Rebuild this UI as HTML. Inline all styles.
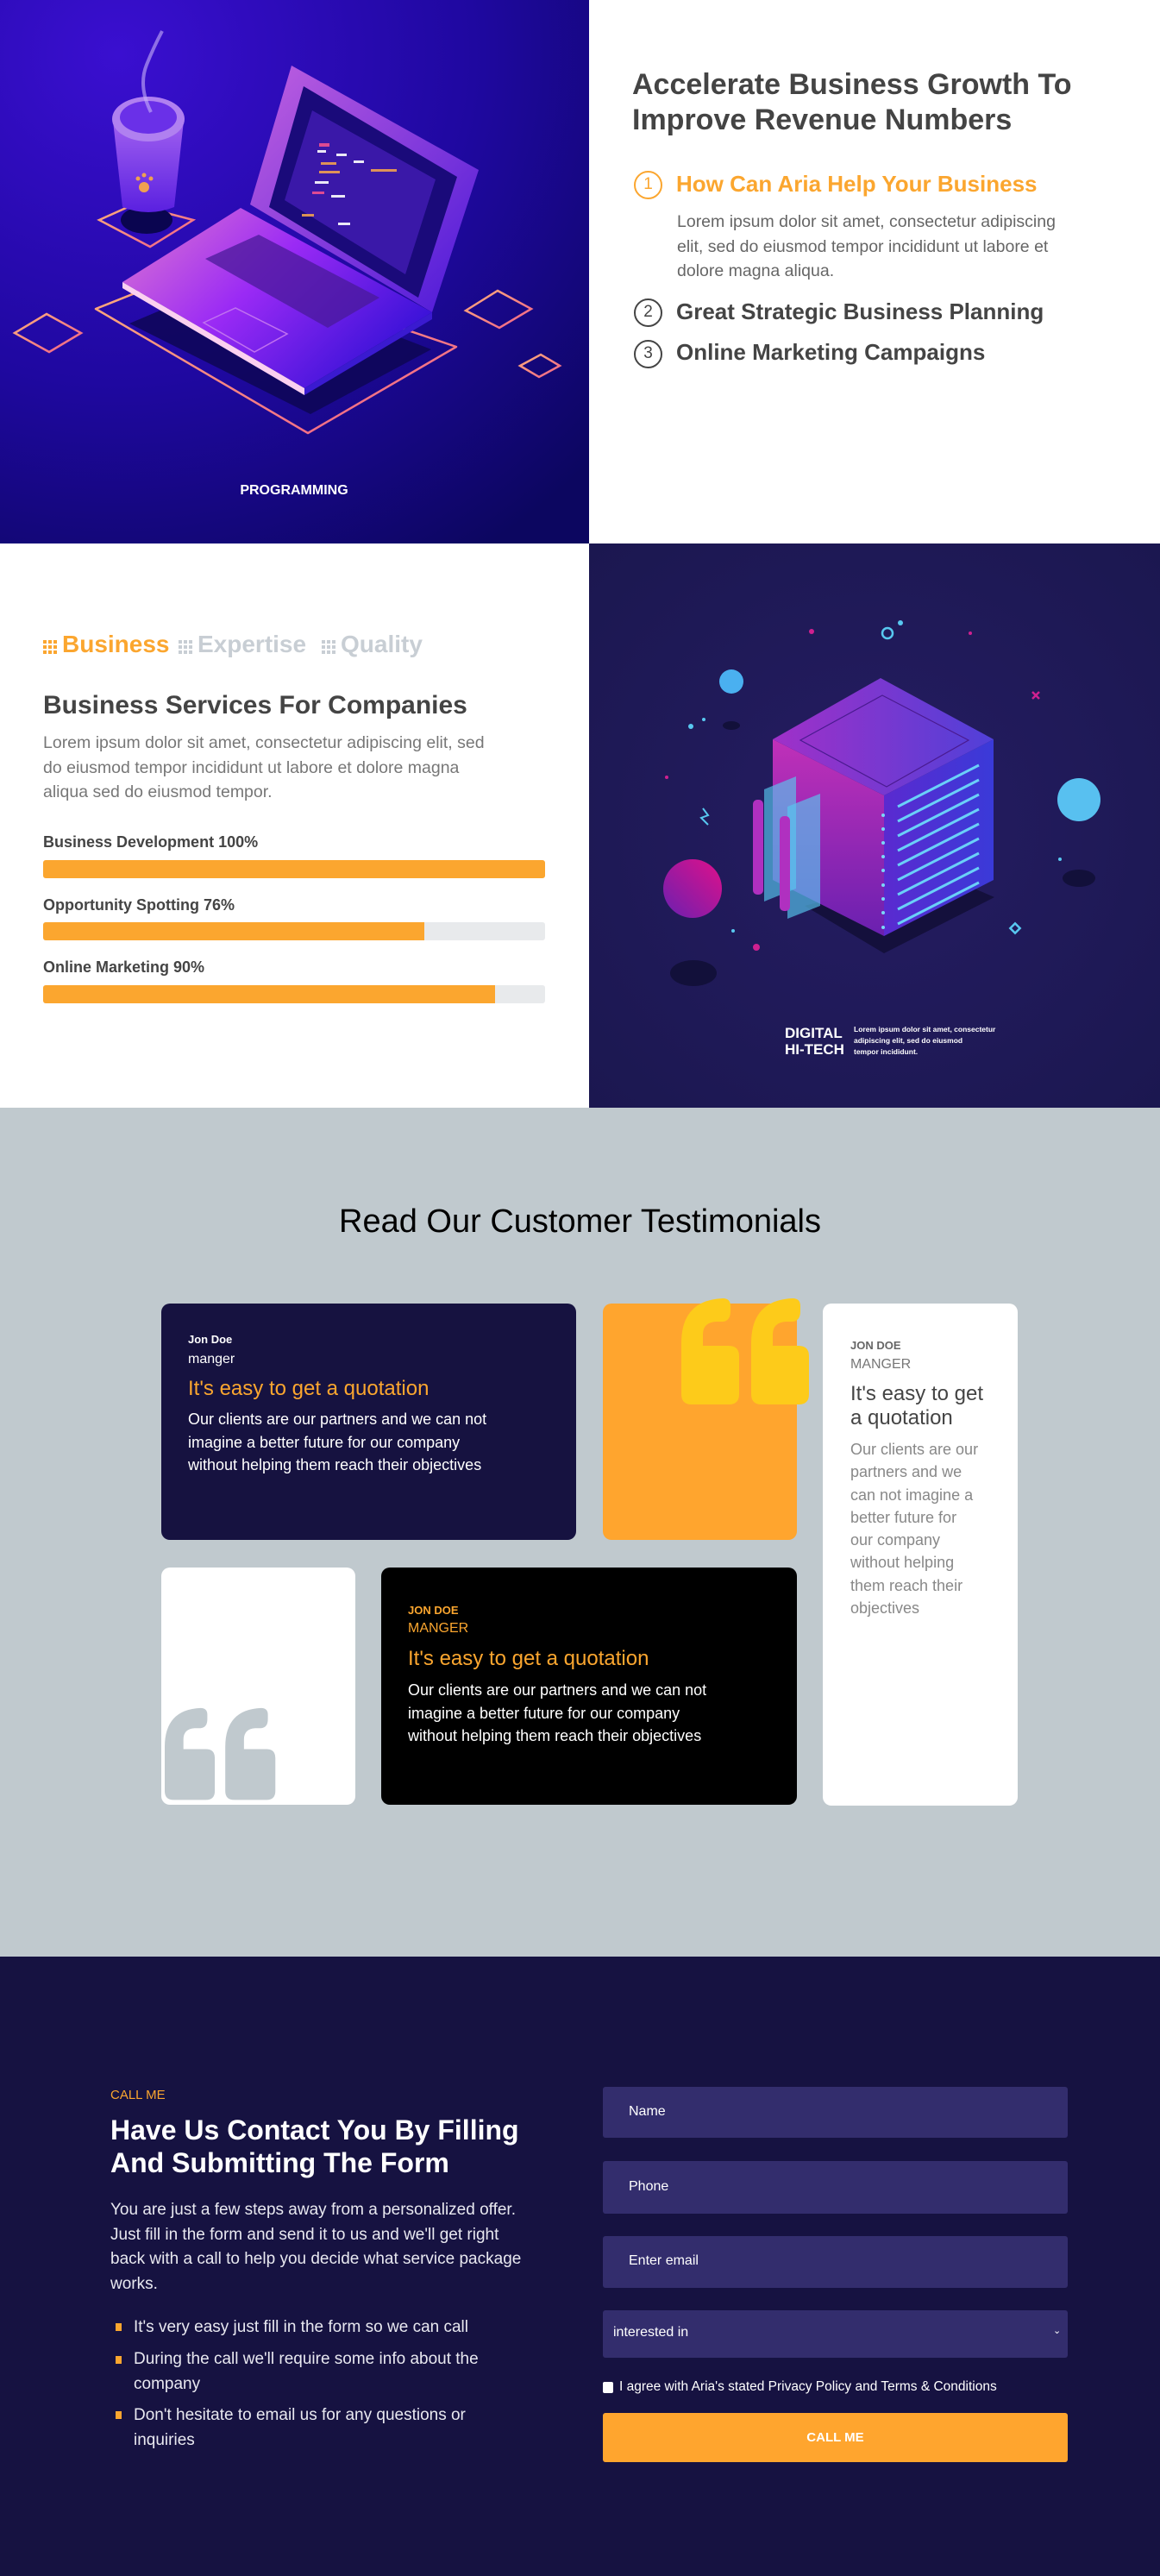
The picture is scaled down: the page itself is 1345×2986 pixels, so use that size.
<!DOCTYPE html>
<html><head><meta charset="utf-8">
<style>
*{margin:0;padding:0;box-sizing:border-box}
body{width:1345px;height:2986px;font-family:"Liberation Sans",sans-serif;background:#fff;position:relative;overflow:hidden}
.a{position:absolute}
.t{position:absolute;white-space:nowrap}
</style></head><body>

<!-- Section 1 left illustration -->
<svg class="a" style="left:0;top:0" width="683" height="630" viewBox="0 0 683 630">
<defs>
<radialGradient id="bg1" cx="0.2" cy="0.1" r="1.1"><stop offset="0" stop-color="#3a0fd0"/><stop offset="0.55" stop-color="#1f08a0"/><stop offset="1" stop-color="#0c0660"/></radialGradient>
<linearGradient id="lap" x1="0" y1="0" x2="1" y2="0.6"><stop offset="0" stop-color="#e07ad0"/><stop offset="0.5" stop-color="#9a2af5"/><stop offset="1" stop-color="#3a12d8"/></linearGradient>
<linearGradient id="scr" x1="0" y1="0" x2="1" y2="1"><stop offset="0" stop-color="#c060e0"/><stop offset="1" stop-color="#4a18d8"/></linearGradient>
<linearGradient id="ln" x1="0" y1="0" x2="1" y2="1"><stop offset="0" stop-color="#ffb07a"/><stop offset="1" stop-color="#f0608a"/></linearGradient>
<linearGradient id="cup" x1="0" y1="0" x2="0" y2="1"><stop offset="0" stop-color="#a060f0"/><stop offset="1" stop-color="#5a20e0"/></linearGradient>
</defs>
<rect width="683" height="630" fill="url(#bg1)"/>
<polygon points="111,358 244,305 529,402 357,502" fill="none" stroke="url(#ln)" stroke-width="2.5" stroke-linejoin="round"/>
<polygon points="150,375 280,320 500,405 360,480" fill="#0c0650" opacity="0.8"/>
<polygon points="17,386 54,364 94,386 57,408" fill="none" stroke="url(#ln)" stroke-width="2.5"/>
<polygon points="540,360 577,337 616,358 579,380" fill="none" stroke="url(#ln)" stroke-width="2.5"/>
<polygon points="603,424 627,411 649,424 625,437" fill="none" stroke="url(#ln)" stroke-width="2.5"/>
<polygon points="115,255 155,237 224,255 174,286" fill="none" stroke="url(#ln)" stroke-width="2.5"/>
<ellipse cx="170" cy="255" rx="30" ry="16" fill="#0a0550"/>
<!-- laptop screen -->
<polygon points="338,76 555,197 501,362 290,237" fill="url(#scr)"/>
<polygon points="352,100 530,205 485,345 312,240" fill="#1a0a7a"/>
<polygon points="362,128 505,208 470,318 330,232" fill="#3a18a8"/>
<g fill="#fff" opacity="0.9">
<rect x="370" y="166" width="12" height="4" fill="#f05090"/><rect x="368" y="174" width="10" height="3"/><rect x="390" y="178" width="12" height="3"/><rect x="372" y="188" width="18" height="3" fill="#f0a050"/><rect x="410" y="186" width="12" height="3"/><rect x="370" y="198" width="24" height="3" fill="#f0a050"/><rect x="430" y="196" width="30" height="3" fill="#f0a050"/><rect x="365" y="210" width="16" height="3"/><rect x="362" y="222" width="14" height="3" fill="#f05090"/><rect x="384" y="226" width="16" height="3"/><rect x="350" y="248" width="14" height="3" fill="#f0a050"/><rect x="392" y="258" width="14" height="3"/>
</g>
<!-- base -->
<polygon points="142,327 279,241 501,362 353,450" fill="url(#lap)"/>
<polygon points="142,327 353,450 353,458 142,334" fill="#fbd0f0"/>
<polygon points="353,450 501,362 501,370 353,458" fill="#3a1ad0"/>
<polygon points="238,300 300,272 440,345 380,380" fill="#4a1a9a" opacity="0.75"/>
<polygon points="236,374 273,357 333,387 295,408" fill="none" stroke="#c070f0" stroke-width="1.5"/>
<!-- cup -->
<path d="M131,140 L142,240 Q172,252 202,240 L213,140 Z" fill="url(#cup)"/>
<ellipse cx="172" cy="138" rx="42" ry="26" fill="#b080f0"/>
<ellipse cx="172" cy="136" rx="33" ry="19" fill="#6a30e8"/>
<circle cx="167" cy="217" r="6" fill="#f0a050"/><circle cx="160" cy="207" r="2.5" fill="#f0a050"/><circle cx="167" cy="203" r="2.5" fill="#f0a050"/><circle cx="175" cy="207" r="2.5" fill="#f0a050"/>
<path d="M175,130 Q160,100 170,75 Q178,55 188,36" fill="none" stroke="#c8b0f8" stroke-width="4" opacity="0.6"/>
<text x="341" y="573" text-anchor="middle" font-family="Liberation Sans" font-weight="bold" font-size="16" fill="#fff">PROGRAMMING</text>
</svg>

<!-- Section 1 right text -->
<div class="t" style="left:733px;top:78px;font-size:34px;line-height:41px;font-weight:bold;color:#444">Accelerate Business Growth To<br>Improve Revenue Numbers</div>
<div class="a" style="left:735px;top:198px;width:33px;height:33px;border:2.5px solid #fba62f;border-radius:50%;color:#fba62f;font-size:19px;text-align:center;line-height:28px">1</div>
<div class="t" style="left:784px;top:198px;font-size:26px;font-weight:bold;color:#fba62f">How Can Aria Help Your Business</div>
<div class="t" style="left:785px;top:243px;font-size:19.5px;line-height:28.5px;color:#666">Lorem ipsum dolor sit amet, consectetur adipiscing<br>elit, sed do eiusmod tempor incididunt ut labore et<br>dolore magna aliqua.</div>
<div class="a" style="left:735px;top:346px;width:33px;height:33px;border:2.5px solid #444;border-radius:50%;color:#444;font-size:19px;text-align:center;line-height:28px">2</div>
<div class="t" style="left:784px;top:346px;font-size:26px;font-weight:bold;color:#444">Great Strategic Business Planning</div>
<div class="a" style="left:735px;top:394px;width:33px;height:33px;border:2.5px solid #444;border-radius:50%;color:#444;font-size:19px;text-align:center;line-height:28px">3</div>
<div class="t" style="left:784px;top:393px;font-size:26px;font-weight:bold;color:#444">Online Marketing Campaigns</div>

<!-- Section 2 left -->
<svg class="a" style="left:50px;top:742px" width="18" height="16"><g fill="#fba62f"><rect x="0" y="0" width="4" height="4"/><rect x="6" y="0" width="4" height="4"/><rect x="12" y="0" width="4" height="4"/><rect x="0" y="6" width="4" height="4"/><rect x="6" y="6" width="4" height="4"/><rect x="12" y="6" width="4" height="4"/><rect x="0" y="12" width="4" height="4"/><rect x="6" y="12" width="4" height="4"/><rect x="12" y="12" width="4" height="4"/></g></svg>
<div class="t" style="left:72px;top:731px;font-size:28px;color:#fba62f;font-weight:bold">Business</div>
<svg class="a" style="left:207px;top:742px" width="18" height="16"><g fill="#c8ced4"><rect x="0" y="0" width="4" height="4"/><rect x="6" y="0" width="4" height="4"/><rect x="12" y="0" width="4" height="4"/><rect x="0" y="6" width="4" height="4"/><rect x="6" y="6" width="4" height="4"/><rect x="12" y="6" width="4" height="4"/><rect x="0" y="12" width="4" height="4"/><rect x="6" y="12" width="4" height="4"/><rect x="12" y="12" width="4" height="4"/></g></svg>
<div class="t" style="left:229px;top:731px;font-size:28px;color:#c8ced4;font-weight:bold">Expertise</div>
<svg class="a" style="left:373px;top:742px" width="18" height="16"><g fill="#c8ced4"><rect x="0" y="0" width="4" height="4"/><rect x="6" y="0" width="4" height="4"/><rect x="12" y="0" width="4" height="4"/><rect x="0" y="6" width="4" height="4"/><rect x="6" y="6" width="4" height="4"/><rect x="12" y="6" width="4" height="4"/><rect x="0" y="12" width="4" height="4"/><rect x="6" y="12" width="4" height="4"/><rect x="12" y="12" width="4" height="4"/></g></svg>
<div class="t" style="left:395px;top:731px;font-size:28px;color:#c8ced4;font-weight:bold">Quality</div>
<div class="t" style="left:50px;top:801px;font-size:30px;font-weight:bold;color:#444">Business Services For Companies</div>
<div class="t" style="left:50px;top:847px;font-size:19.5px;line-height:28.5px;color:#777">Lorem ipsum dolor sit amet, consectetur adipiscing elit, sed<br>do eiusmod tempor incididunt ut labore et dolore magna<br>aliqua sed do eiusmod tempor.</div>
<div class="t" style="left:50px;top:966px;font-size:18px;font-weight:bold;color:#444">Business Development 100%</div>
<div class="a" style="left:50px;top:997px;width:582px;height:21px;background:#e8eaec;border-radius:3px;overflow:hidden"><div style="width:100%;height:100%;background:#fba62f"></div></div>
<div class="t" style="left:50px;top:1039px;font-size:18px;font-weight:bold;color:#444">Opportunity Spotting 76%</div>
<div class="a" style="left:50px;top:1069px;width:582px;height:21px;background:#e8eaec;border-radius:3px;overflow:hidden"><div style="width:76%;height:100%;background:#fba62f"></div></div>
<div class="t" style="left:50px;top:1111px;font-size:18px;font-weight:bold;color:#444">Online Marketing 90%</div>
<div class="a" style="left:50px;top:1142px;width:582px;height:21px;background:#e8eaec;border-radius:3px;overflow:hidden"><div style="width:90%;height:100%;background:#fba62f"></div></div>

<!-- Section 2 right illustration -->
<svg class="a" style="left:683px;top:630px" width="662" height="654" viewBox="0 0 662 654">
<defs>
<radialGradient id="bg2" cx="0.5" cy="0.5" r="0.7"><stop offset="0" stop-color="#251d62"/><stop offset="1" stop-color="#1b1750"/></radialGradient>
<linearGradient id="ct" x1="0" y1="0" x2="1" y2="0"><stop offset="0" stop-color="#a030c8"/><stop offset="1" stop-color="#5040d8"/></linearGradient>
<linearGradient id="cl" x1="0" y1="0" x2="0" y2="1"><stop offset="0" stop-color="#c030b8"/><stop offset="1" stop-color="#6a20b0"/></linearGradient>
<linearGradient id="cr" x1="0" y1="0" x2="1" y2="0"><stop offset="0" stop-color="#5a2ad0"/><stop offset="1" stop-color="#3a3ad8"/></linearGradient>
<linearGradient id="mg" x1="1" y1="0" x2="0" y2="1"><stop offset="0" stop-color="#e0108a"/><stop offset="1" stop-color="#6a20b0"/></linearGradient>
</defs>
<rect width="662" height="654" fill="url(#bg2)"/>
<ellipse cx="165" cy="211" rx="10" ry="5" fill="#12103a"/>
<ellipse cx="568" cy="388" rx="19" ry="10" fill="#12103a"/>
<ellipse cx="121" cy="498" rx="27" ry="15" fill="#12103a"/>
<polygon points="250,420 342,475 470,410 400,380" fill="#14103c"/>
<polygon points="213,227 342,292 342,455 213,390" fill="url(#cl)"/>
<polygon points="342,292 469,227 469,390 342,455" fill="url(#cr)"/>
<polygon points="213,227 338,156 469,227 342,292" fill="url(#ct)"/>
<polygon points="245,228 340,176 440,228 345,282" fill="none" stroke="#4a1a90" stroke-width="1.2"/>
<g stroke="#6ad0f8" stroke-width="3">
<line x1="358" y1="305" x2="452" y2="257"/><line x1="358" y1="322" x2="452" y2="274"/><line x1="358" y1="339" x2="452" y2="291"/><line x1="358" y1="356" x2="452" y2="308"/><line x1="358" y1="373" x2="452" y2="325"/><line x1="358" y1="390" x2="452" y2="342"/><line x1="358" y1="407" x2="452" y2="359"/><line x1="358" y1="424" x2="452" y2="376"/><line x1="358" y1="441" x2="452" y2="393"/>
</g>
<g fill="#7ad8f8"><circle cx="341" cy="315" r="2"/><circle cx="341" cy="331" r="2"/><circle cx="341" cy="347" r="2"/><circle cx="341" cy="363" r="2"/><circle cx="341" cy="379" r="2"/><circle cx="341" cy="396" r="2"/><circle cx="341" cy="412" r="2"/><circle cx="341" cy="428" r="2"/><circle cx="341" cy="445" r="2"/></g>
<polygon points="203,285 240,270 240,400 203,415" fill="#58c8f0" opacity="0.65"/>
<polygon points="230,305 268,290 268,420 230,435" fill="#58c8f0" opacity="0.65"/>
<rect x="190" y="297" width="12" height="110" rx="5" fill="#b030c0"/>
<rect x="221" y="316" width="12" height="110" rx="5" fill="#b030c0"/>
<circle cx="165" cy="160" r="14" fill="#4ab0f0"/>
<circle cx="568" cy="297" r="25" fill="#58c0f0"/>
<circle cx="120" cy="400" r="34" fill="url(#mg)"/>
<circle cx="346" cy="104" r="6" fill="none" stroke="#58c8f0" stroke-width="2.5"/>
<circle cx="361" cy="92" r="3" fill="#58c8f0"/>
<circle cx="258" cy="102" r="3" fill="#d02090"/><circle cx="442" cy="104" r="2" fill="#d02090"/><circle cx="90" cy="271" r="2" fill="#d02090"/><circle cx="194" cy="468" r="4" fill="#d02090"/>
<circle cx="118" cy="212" r="3" fill="#58c8f0"/><circle cx="133" cy="204" r="2" fill="#58c8f0"/><circle cx="167" cy="449" r="2" fill="#58c8f0"/><circle cx="546" cy="366" r="2" fill="#58c8f0"/>
<path d="M514,172 l8,8 M522,172 l-8,8" stroke="#d02090" stroke-width="2.5"/>
<rect x="490" y="442" width="8" height="8" transform="rotate(45 494 446)" fill="none" stroke="#58c8f0" stroke-width="2.5"/>
<path d="M132,307 l6,8 l-8,3 l8,8" fill="none" stroke="#58c8f0" stroke-width="2"/>
<text x="227" y="573" font-family="Liberation Sans" font-weight="bold" font-size="17" fill="#fff">DIGITAL</text>
<text x="227" y="592" font-family="Liberation Sans" font-weight="bold" font-size="17" fill="#fff">HI-TECH</text>
<text x="307" y="566" font-family="Liberation Sans" font-weight="bold" font-size="8.5" fill="#fff">Lorem ipsum dolor sit amet, consectetur</text>
<text x="307" y="579" font-family="Liberation Sans" font-weight="bold" font-size="8.5" fill="#fff">adipiscing elit, sed do eiusmod</text>
<text x="307" y="592" font-family="Liberation Sans" font-weight="bold" font-size="8.5" fill="#fff">tempor incididunt.</text>
</svg>

<!-- Testimonials -->
<div class="a" style="left:0;top:1284px;width:1345px;height:984px;background:#c0c9ce"></div>
<div class="t" style="left:0;width:1345px;text-align:center;top:1395px;font-size:38px;color:#000">Read Our Customer Testimonials</div>

<div class="a" style="left:187px;top:1511px;width:481px;height:274px;background:#161240;border-radius:10px"></div>
<div class="t" style="left:218px;top:1545px;font-size:13px;font-weight:bold;color:#fff">Jon Doe</div>
<div class="t" style="left:218px;top:1567px;font-size:16px;color:#fff">manger</div>
<div class="t" style="left:218px;top:1596px;font-size:24px;color:#fba62f">It's easy to get a quotation</div>
<div class="t" style="left:218px;top:1632px;font-size:18px;line-height:26.5px;color:#fff">Our clients are our partners and we can not<br>imagine a better future for our company<br>without helping them reach their objectives</div>

<div class="a" style="left:699px;top:1511px;width:225px;height:274px;background:#ffa52e;border-radius:10px"></div>
<svg class="a" style="left:790px;top:1505px" width="150" height="125" viewBox="0 0 150 125"><g fill="#fdcb1a">
<path d="M12,123 H55 Q67,123 67,111 V67 Q67,55 55,55 H25 V42 Q25,28 40,27 H48 Q57,26 57,15 V9 Q57,0 48,0 Q0,2 0,52 V111 Q0,123 12,123 Z"/>
<path transform="translate(81,0)" d="M12,123 H55 Q67,123 67,111 V67 Q67,55 55,55 H25 V42 Q25,28 40,27 H48 Q57,26 57,15 V9 Q57,0 48,0 Q0,2 0,52 V111 Q0,123 12,123 Z"/>
</g></svg>

<div class="a" style="left:954px;top:1511px;width:226px;height:582px;background:#fff;border-radius:10px"></div>
<div class="t" style="left:986px;top:1552px;font-size:13px;font-weight:bold;color:#666">JON DOE</div>
<div class="t" style="left:986px;top:1573px;font-size:16px;color:#777">MANGER</div>
<div class="t" style="left:986px;top:1602px;font-size:24px;line-height:28px;color:#444">It's easy to get<br>a quotation</div>
<div class="t" style="left:986px;top:1667px;font-size:18px;line-height:26.3px;color:#888">Our clients are our<br>partners and we<br>can not imagine a<br>better future for<br>our company<br>without helping<br>them reach their<br>objectives</div>

<div class="a" style="left:187px;top:1817px;width:225px;height:275px;background:#fff;border-radius:10px;overflow:hidden">
<svg class="a" style="left:4px;top:152px" width="130" height="130" viewBox="0 0 150 125"><g fill="#c0c9ce">
<path d="M12,123 H55 Q67,123 67,111 V67 Q67,55 55,55 H25 V42 Q25,28 40,27 H48 Q57,26 57,15 V9 Q57,0 48,0 Q0,2 0,52 V111 Q0,123 12,123 Z"/>
<path transform="translate(81,0)" d="M12,123 H55 Q67,123 67,111 V67 Q67,55 55,55 H25 V42 Q25,28 40,27 H48 Q57,26 57,15 V9 Q57,0 48,0 Q0,2 0,52 V111 Q0,123 12,123 Z"/>
</g></svg></div>

<div class="a" style="left:442px;top:1817px;width:482px;height:275px;background:#000;border-radius:10px"></div>
<div class="t" style="left:473px;top:1859px;font-size:13px;font-weight:bold;color:#fba62f">JON DOE</div>
<div class="t" style="left:473px;top:1879px;font-size:16px;color:#fba62f">MANGER</div>
<div class="t" style="left:473px;top:1909px;font-size:24px;color:#fba62f">It's easy to get a quotation</div>
<div class="t" style="left:473px;top:1946px;font-size:18px;line-height:26.5px;color:#fff">Our clients are our partners and we can not<br>imagine a better future for our company<br>without helping them reach their objectives</div>

<!-- Contact -->
<div class="a" style="left:0;top:2268px;width:1345px;height:718px;background:#161241"></div>
<div class="t" style="left:128px;top:2420px;font-size:15px;color:#fba62f">CALL ME</div>
<div class="t" style="left:128px;top:2450px;font-size:32px;line-height:38px;font-weight:bold;color:#fff">Have Us Contact You By Filling<br>And Submitting The Form</div>
<div class="t" style="left:128px;top:2548px;font-size:19px;line-height:28.5px;color:#e8e8f0">You are just a few steps away from a personalized offer.<br>Just fill in the form and send it to us and we'll get right<br>back with a call to help you decide what service package<br>works.</div>
<div class="a" style="left:134px;top:2693px;width:7px;height:9px;background:#fba62f"></div>
<div class="a" style="left:134px;top:2731px;width:7px;height:9px;background:#fba62f"></div>
<div class="a" style="left:134px;top:2795px;width:7px;height:9px;background:#fba62f"></div>
<div class="t" style="left:155px;top:2684px;font-size:19px;line-height:28.5px;color:#e8e8f0">It's very easy just fill in the form so we can call</div>
<div class="t" style="left:155px;top:2721px;font-size:19px;line-height:28.5px;color:#e8e8f0">During the call we'll require some info about the<br>company</div>
<div class="t" style="left:155px;top:2786px;font-size:19px;line-height:28.5px;color:#e8e8f0">Don't hesitate to email us for any questions or<br>inquiries</div>

<div class="a" style="left:699px;top:2419px;width:539px;height:59px;background:#332d6d;border-radius:3px"></div>
<div class="t" style="left:729px;top:2439px;font-size:16px;color:#fff">Name</div>
<div class="a" style="left:699px;top:2505px;width:539px;height:61px;background:#332d6d;border-radius:3px"></div>
<div class="t" style="left:729px;top:2526px;font-size:16px;color:#fff">Phone</div>
<div class="a" style="left:699px;top:2592px;width:539px;height:60px;background:#332d6d;border-radius:3px"></div>
<div class="t" style="left:729px;top:2612px;font-size:16px;color:#fff">Enter email</div>
<div class="a" style="left:699px;top:2678px;width:539px;height:55px;background:#332d6d;border-radius:3px"></div>
<div class="t" style="left:711px;top:2695px;font-size:16px;color:#fff">interested in</div>
<div class="t" style="left:1221px;top:2695px;font-size:11px;color:#fff">&#8964;</div>
<div class="a" style="left:699px;top:2761px;width:12px;height:13px;background:#fff;border-radius:2px"></div>
<div class="t" style="left:718px;top:2758px;font-size:15.5px;color:#fff">I agree with Aria's stated Privacy Policy and Terms &amp; Conditions</div>
<div class="a" style="left:699px;top:2797px;width:539px;height:57px;background:#ffa52e;border-radius:3px;color:#fff;font-weight:bold;font-size:15px;text-align:center;line-height:57px">CALL ME</div>

</body></html>
